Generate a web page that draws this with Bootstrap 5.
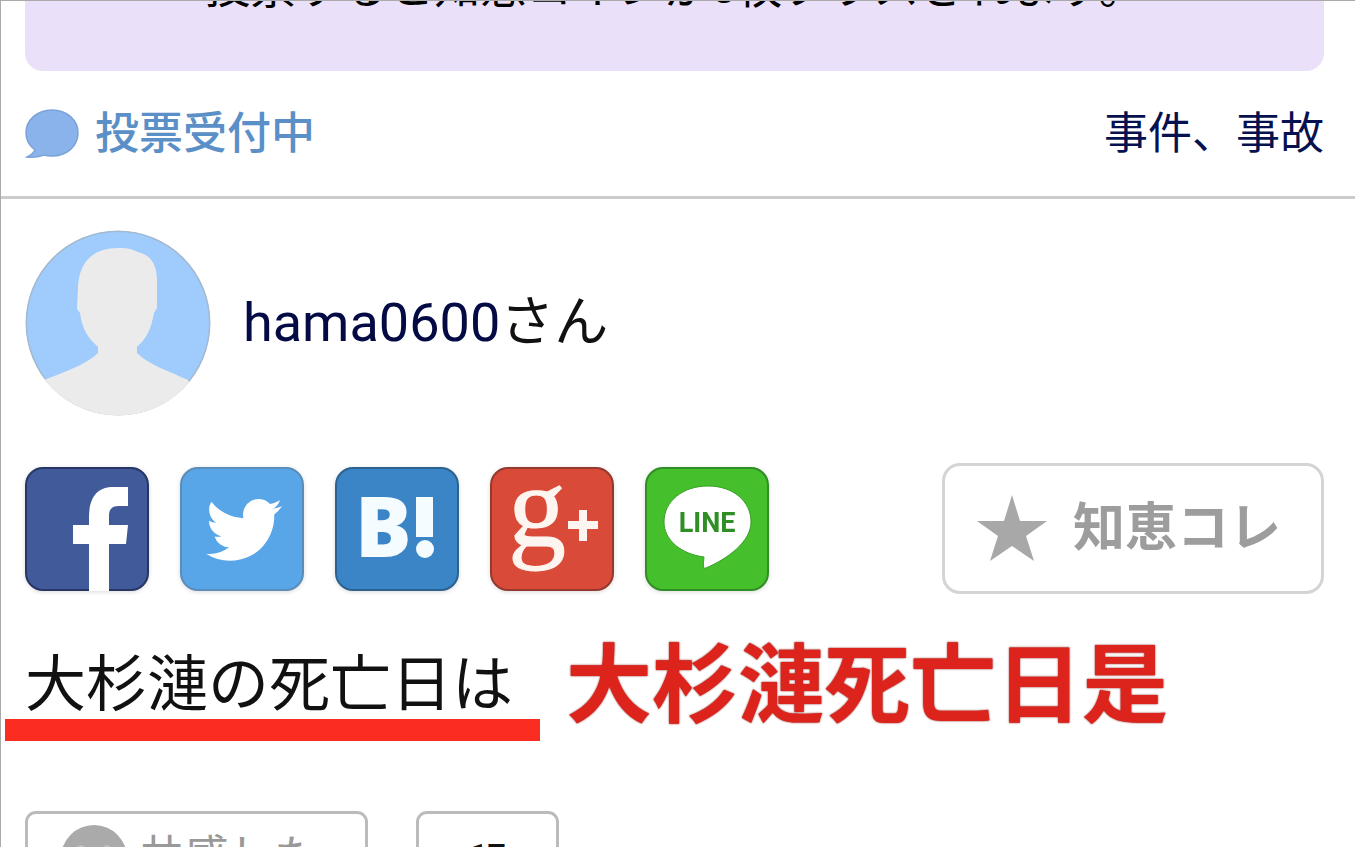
<!DOCTYPE html>
<html lang="ja">
<head>
<meta charset="utf-8">
<meta name="viewport" content="width=device-width, initial-scale=1">
<title>知恵袋</title>
<link href="https://cdn.jsdelivr.net/npm/bootstrap@5.3.0/dist/css/bootstrap.min.css" rel="stylesheet">
<style>
  body { font-family: Roboto, "Noto Sans CJK JP", sans-serif; color: #111; background: #fff; }
  .page { height: 100vh; border-top: 1px solid #aaa; border-left: 1px solid #aaa; }
  .gutter { padding-left: 24px; padding-right: 31px; }
  .notice { height: 70px; padding-bottom: 60px; background: #eae0fa; border-radius: 0 0 18px 18px; font-size: 46px; line-height: 48px; color: #000; }
  .status { height: 125px; font-size: 44px; line-height: 64px; }
  .status-label { color: #5b8fc7; font-weight: 500; }
  .category { color: #06124f; }
  .rule { border-top: 3px solid #ccc; }
  .author { padding-top: 31px; font-size: 54px; line-height: 64px; }
  .author a { color: #040a44; }
  .share { padding-top: 47px; }
  .share-list { gap: 31px; }
  .share-list svg { display: block; filter: drop-shadow(0 1px 2px rgba(0,0,0,.15)); }
  .fav { width: 382px; height: 131px; padding: 0 8px 0 0; border: 3px solid #d4d4d4; border-radius: 18px; color: #9d9d9d; font-size: 52px; font-weight: 700; line-height: 66px; gap: 26px; }
  .fav svg, .agree svg { flex: none; }
  .question { padding: 58px 31px 0 4px; gap: 26px; }
  .question h1 { margin: 0; padding: 0 27px 0 20px; font-size: 61px; line-height: 67px; font-weight: 400; border-bottom: 22px solid #fb2c20; }
  .caption-red { font-size: 86px; line-height: 70px; font-weight: 700; color: #dc231c; text-shadow: 0 0 2px #7c0f0b; }
  .actions { padding-top: 70px; gap: 48px; }
  .agree, .count { height: 93px; border: 3px solid #bbb; border-radius: 11px; }
  .agree { width: 343px; padding: 0 33px; gap: 12px; font-size: 45px; line-height: 64px; color: #999; }
  .count { width: 143px; padding-bottom: 6px; font-size: 32px; font-weight: 700; }
</style>
</head>
<body>
<main class="page overflow-hidden">
  <div class="gutter">
    <div class="notice d-flex align-items-end justify-content-center overflow-hidden text-nowrap">投票すると知恵コインが5枚プラスされます。</div>
    <div class="status d-flex align-items-center justify-content-between">
      <div class="status-label d-flex align-items-center gap-3">
        <svg width="54" height="50" viewBox="0 0 54 50" aria-hidden="true"><path d="M27 1C42 1 53 11 53 24S42 47 27 47q-5 0-8-1-8 3-17 2 6-3 8-7Q1 34 1 24C1 11 12 1 27 1Z" fill="#8bb3eb" stroke="#7ba3d8" stroke-width="1.5"/></svg>
        <span>投票受付中</span>
      </div>
      <a href="#" class="category text-decoration-none">事件、事故</a>
    </div>
  </div>
  <div class="rule"></div>
  <div class="gutter">
    <div class="author d-flex align-items-center">
      <svg class="flex-shrink-0 me-4" width="186" height="186" viewBox="0 0 186 186" role="img" aria-label="hama0600">
        <defs><clipPath id="face"><circle cx="93" cy="93" r="92.5"/></clipPath></defs>
        <g clip-path="url(#face)">
          <circle cx="93" cy="93" r="92" fill="#9fcbfd" stroke="#a3b9cf" stroke-width="2"/>
          <path d="M93 18C67 18 54 33 53 57l-1 22 3 4c2 16 8 25 18 34v6c-11 11-31 18-54 27L0 190h186l-23-40c-22-10-40-16-51-27v-6c10-9 14-18 17-34l3-5V51c0-18-7-26-19-29-8-4-13-4-20-4Z" fill="#ebebeb"/>
        </g>
      </svg>
      <div class="ps-2"><a href="#" class="text-decoration-none">hama0600</a>さん</div>
    </div>
    <div class="share d-flex align-items-center justify-content-between">
      <div class="share-list d-flex">
        <a href="#" aria-label="Facebook"><svg width="124" height="124" viewBox="0 0 124 124"><rect x="1" y="1" width="122" height="122" rx="17" fill="#415a99" stroke="#273665" stroke-width="2"/><path d="M64 124V77H48V58H64V50C64 31 72 20 88 20H103V39H94C87 39 84 42 84 49V58H103L101 77H84V124Z" fill="#fff"/></svg></a>
        <a href="#" aria-label="Twitter"><svg width="124" height="124" viewBox="0 0 124 124"><rect x="1" y="1" width="122" height="122" rx="17" fill="#58a6e8" stroke="#5a8db9" stroke-width="2"/><path transform="translate(26 22.5) scale(4.75)" fill="#fff" d="M5.026 15c6.038 0 9.341-5.003 9.341-9.334 0-.14 0-.282-.006-.422A6.685 6.685 0 0 0 16 3.542a6.658 6.658 0 0 1-1.889.518 3.301 3.301 0 0 0 1.447-1.817 6.533 6.533 0 0 1-2.087.793A3.286 3.286 0 0 0 7.875 6.03a9.325 9.325 0 0 1-6.767-3.429 3.289 3.289 0 0 0 1.018 4.382A3.323 3.323 0 0 1 .64 6.575v.045a3.288 3.288 0 0 0 2.632 3.218 3.203 3.203 0 0 1-.865.115 3.23 3.23 0 0 1-.614-.057 3.283 3.283 0 0 0 3.067 2.277A6.588 6.588 0 0 1 .78 13.58a6.32 6.32 0 0 1-.78-.045A9.344 9.344 0 0 0 5.026 15z"/></svg></a>
        <a href="#" aria-label="はてなブックマーク"><svg width="124" height="124" viewBox="0 0 124 124"><rect x="1" y="1" width="122" height="122" rx="17" fill="#3b85c6" stroke="#2c628f" stroke-width="2"/><text x="20" y="90" font-family="Open Sans" font-weight="800" font-size="84" fill="#f4fcff">B</text><path d="M81 30h17v40H81Z" fill="#f4fcff"/><circle cx="90" cy="82" r="9" fill="#f4fcff"/></svg></a>
        <a href="#" aria-label="Google+"><svg width="124" height="124" viewBox="0 0 124 124"><rect x="1" y="1" width="122" height="122" rx="17" fill="#da4a38" stroke="#93392e" stroke-width="2"/><text x="18" y="79" font-family="Liberation Serif" font-size="116" fill="#fff5f0" stroke="#fff5f0" stroke-width="1">g</text><path d="M89 43h8v11h11v8H97v12h-8V62H78v-8h11Z" fill="#fff5f0"/></svg></a>
        <a href="#" aria-label="LINE"><svg width="124" height="124" viewBox="0 0 124 124"><rect x="1" y="1" width="122" height="122" rx="17" fill="#46bf2c" stroke="#2f8e24" stroke-width="2"/><path d="M63 19c25 0 43 15 43 36 0 20-24 37-45 46-3 1-3-1-2-11-23-3-40-17-40-35 0-21 19-36 44-36Z" fill="#fff" stroke="#36a026"/><text x="62" y="65" text-anchor="middle" font-family="Roboto" font-weight="700" font-size="27" fill="#2f8e24">LINE</text></svg></a>
      </div>
      <button type="button" class="fav btn bg-white d-flex align-items-center justify-content-center">
        <svg width="70" height="67" viewBox="0 0 70 67" aria-hidden="true"><path d="M35 0 43 26 70 26 49 41 57 66 35 51 13 66 21 41 0 26 27 26Z" fill="#a8a8a8"/></svg>
        <span>知恵コレ</span>
      </button>
    </div>
  </div>
  <div class="question d-flex align-items-start text-nowrap">
    <h1>大杉漣の死亡日は</h1>
    <div class="caption-red">大杉漣死亡日是</div>
  </div>
  <div class="gutter actions d-flex">
    <button type="button" class="agree btn bg-white d-flex align-items-center text-nowrap">
      <svg width="66" height="66" viewBox="0 0 66 66" aria-hidden="true"><circle cx="33" cy="33" r="33" fill="#aaa"/><path d="M16 24q4-6 8 0M42 24q4-6 8 0M17 38q16 20 32 0" fill="none" stroke="#c0c0c0" stroke-width="2"/></svg>
      <span>共感した</span>
    </button>
    <div class="count d-flex align-items-center justify-content-center">17</div>
  </div>
</main>
<script src="https://cdn.jsdelivr.net/npm/bootstrap@5.3.0/dist/js/bootstrap.bundle.min.js"></script>
</body>
</html>
